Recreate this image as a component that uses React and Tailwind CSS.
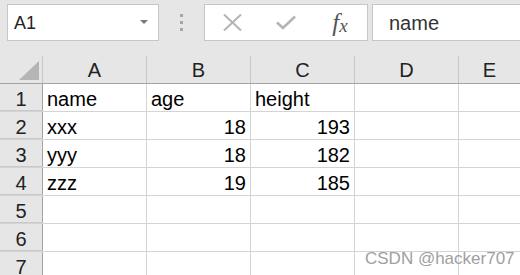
const cols = ['A', 'B', 'C', 'D', 'E'];

const rows = [
  ['name', 'age', 'height'],
  ['xxx', '18', '193'],
  ['yyy', '18', '182'],
  ['zzz', '19', '185'],
  [],
  [],
  [],
];

function Cell({ value, last }) {
  const isNum = value && /^\d+$/.test(value);
  return (
    <div
      className={`${last ? 'flex-1' : 'w-[104px] shrink-0 border-r'} h-full border-[#d4d4d4] flex items-center px-[4px] pt-[3px] ${isNum ? 'justify-end' : 'justify-start'}`}
    >
      {value}
    </div>
  );
}

function App() {
  return (
    <div
      className="relative w-[520px] h-[275px] overflow-hidden bg-white text-[#000] text-[20px] leading-none"
      style={{ fontFamily: '"Liberation Sans", Arial, "Noto Sans CJK SC", sans-serif' }}
    >
      {/* formula bar */}
      <div className="h-[56px] bg-[#e6e6e6] flex items-start pt-[4px]">
        <div className="ml-[7px] w-[152px] h-[37px] bg-white border border-[#c6c6c6] flex items-center pl-[6px] pr-[10px]">
          <span className="flex-1 text-[18px] text-[#222]">A1</span>
          <svg width="8" height="5" viewBox="0 0 8 5">
            <path d="M0 0 L8 0 L4 4 Z" fill="#777" />
          </svg>
        </div>
        <div className="w-[45px] h-[37px] flex flex-col items-center justify-center gap-[4px]">
          <div className="w-[3px] h-[3px] bg-[#a6a6a6]" />
          <div className="w-[3px] h-[3px] bg-[#a6a6a6]" />
          <div className="w-[3px] h-[3px] bg-[#a6a6a6]" />
        </div>
        <div className="w-[164px] h-[37px] bg-white border border-[#c6c6c6] flex items-center">
          <div className="w-[54px] flex justify-center">
            <svg width="19" height="17" viewBox="0 0 19 17">
              <path d="M1 0.5 L18 16.5 M18 0.5 L1 16.5" stroke="#b4b4b4" strokeWidth="2" fill="none" />
            </svg>
          </div>
          <div className="w-[54px] flex justify-center">
            <svg width="20" height="15" viewBox="0 0 20 15">
              <path d="M1 7.5 L7 13 L19 1.5" stroke="#b4b4b4" strokeWidth="2.6" fill="none" />
            </svg>
          </div>
          <div
            className="w-[54px] flex justify-center items-end italic text-[#555] text-[25px]"
            style={{ fontFamily: '"Liberation Serif", "Times New Roman", serif' }}
          >
            <span>f</span>
            <span className="text-[19px]">x</span>
          </div>
        </div>
        <div className="ml-[4px] flex-1 -mr-[4px] h-[37px] bg-white border border-[#c6c6c6] flex items-center pl-[16px] text-[#333]">
          name
        </div>
      </div>

      {/* column headers */}
      <div className="flex h-[28px] bg-[#e6e6e6] border-b border-[#a3a3a3]">
        <div className="w-[43px] shrink-0 h-full border-r border-[#c8c8c8] relative">
          <svg className="absolute left-[19px] top-[5px]" width="20" height="19" viewBox="0 0 20 19">
            <path d="M20 0 L20 19 L0 19 Z" fill="#b5b5b5" />
          </svg>
        </div>
        {cols.map((c, i) => (
          <div
            key={c}
            className={`${i === cols.length - 1 ? 'flex-1' : 'w-[104px] shrink-0 border-r border-[#c8c8c8]'} h-full flex items-center justify-center pt-[1px] text-[#222]`}
          >
            {c}
          </div>
        ))}
      </div>

      {/* rows */}
      {rows.map((r, idx) => (
        <div key={idx} className="flex h-[28px] border-b border-[#d4d4d4]">
          <div className="w-[43px] shrink-0 h-full bg-[#e6e6e6] border-r border-[#a3a3a3] flex items-center justify-center pt-[3px] text-[#222] -mb-px border-b border-b-[#c8c8c8]">
            {idx + 1}
          </div>
          {cols.map((c, i) => (
            <Cell key={c} value={r[i]} last={i === cols.length - 1} />
          ))}
        </div>
      ))}

      <div className="absolute left-[365px] top-[250px] text-[17px] text-[#a0a0a0] whitespace-nowrap">
        CSDN @hacker707
      </div>
    </div>
  );
}

export default App;
